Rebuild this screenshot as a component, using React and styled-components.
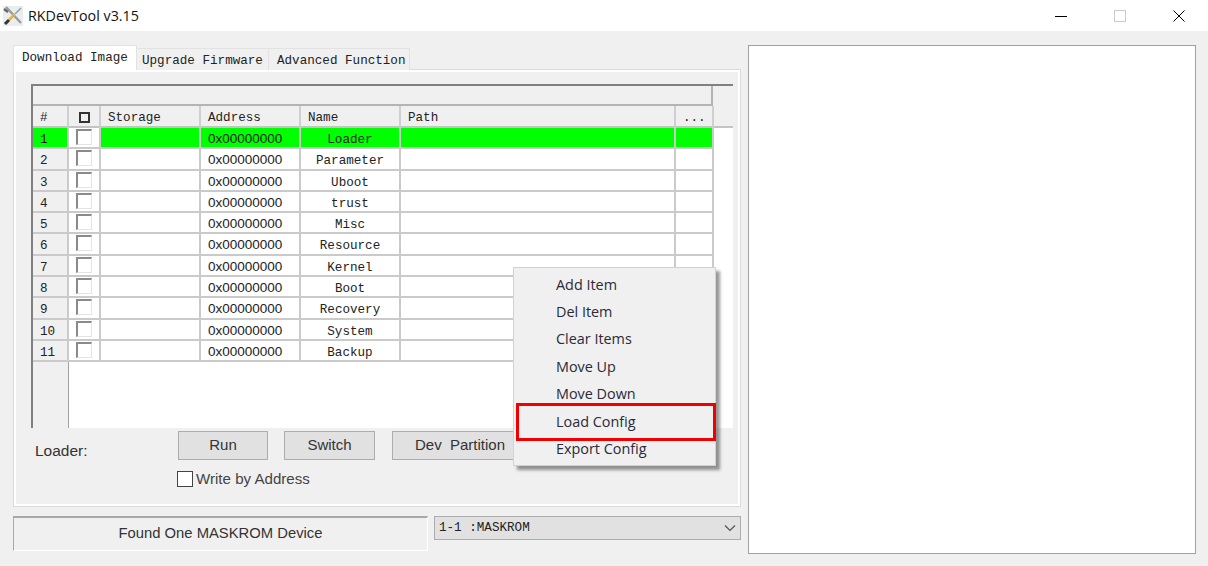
import styled, { createGlobalStyle } from "styled-components";

const partitions = ["Loader", "Parameter", "Uboot", "trust", "Misc", "Resource", "Kernel", "Boot", "Recovery", "System", "Backup"];
const menuItems = ["Add Item", "Del Item", "Clear Items", "Move Up", "Move Down", "Load Config", "Export Config"];

const mono = `"Liberation Mono", "DejaVu Sans Mono", monospace`;
const sans = `"Liberation Sans", Arial, sans-serif`;
const columns = "36px 32px 100px 100px 100px 275px 38px";

const Global = createGlobalStyle`
  html, body { margin: 0; padding: 0; background: #f0f0f0; }
  #root { width: 1208px; height: 566px; overflow: hidden; }
`;

const Win = styled.div`
  position: relative;
  width: 1208px;
  height: 566px;
  background: #f0f0f0;
  font-family: ${sans};
  color: #222;
`;

const TitleBar = styled.header`
  height: 31px;
  background: #fff;
  display: flex;
  align-items: center;
  padding-left: 3px;
  font-family: "Open Sans", "Noto Sans", sans-serif;
  font-size: 14.3px;
  color: #111;
`;

const Title = styled.span`
  margin-left: 5px;
  flex: 1;
`;

const WinButton = styled.div`
  width: 59px;
  height: 31px;
  display: flex;
  align-items: center;
  justify-content: center;
`;

const Body = styled.main`
  display: flex;
  gap: 7px;
  padding: 14px 0 0 13px;
`;

const LeftColumn = styled.div`
  width: 728px;
`;

const Tabs = styled.nav`
  display: flex;
  align-items: flex-end;
  height: 25px;
  margin-bottom: -1px;
  position: relative;
  z-index: 1;
`;

const Tab = styled.div`
  box-sizing: border-box;
  width: ${(p) => p.$w}px;
  height: ${(p) => (p.$active ? 25 : 22)}px;
  background: ${(p) => (p.$active ? "#fff" : "#f0f0f0")};
  border: 1px solid #e2e2e2;
  border-bottom: none;
  border-left-width: ${(p) => (p.$active ? 1 : 0)}px;
  font-family: ${mono};
  font-size: 12.6px;
  line-height: 24px;
  padding-left: ${(p) => p.$pad}px;
  white-space: nowrap;
  color: #222;
`;

const Panel = styled.section`
  box-sizing: border-box;
  height: 438px;
  border: 1px solid #dcdcdc;
  box-shadow: inset 2px 2px 0 #fff, inset -2px -2px 0 #fff;
  padding: 14px 7px 0 17px;
`;

const Frame = styled.div`
  box-sizing: border-box;
  width: 702px;
  height: 344px;
  display: flex;
  flex-direction: column;
  background: #fff;
  border-top: 2px solid #808080;
  border-left: 2px solid #808080;
`;

const TopStrip = styled.div`
  flex: none;
  height: 20px;
  background: #f0f0f0;
`;

const TopStripInner = styled.div`
  box-sizing: border-box;
  width: 680px;
  height: 20px;
  border-right: 2px solid #b4b4b4;
  border-bottom: 2px solid #b4b4b4;
`;

const HeaderRow = styled.div`
  flex: none;
  display: grid;
  grid-template-columns: ${columns} 1fr;
  height: 22px;
  background: #f0f0f0;
  box-shadow: inset 0 -2px 0 #c4c4c4;
`;

const HeaderCell = styled.div`
  box-sizing: border-box;
  border-right: 2px solid ${(p) => (p.$plain ? "transparent" : "#cfcfcf")};
  padding-left: 7px;
  padding-top: 2px;
  font-family: ${mono};
  font-size: 12.6px;
  line-height: 21px;
  color: #222;
  display: flex;
  align-items: center;
  justify-content: ${(p) => (p.$center ? "center" : "flex-start")};
`;

const HeaderCheck = styled.span`
  box-sizing: border-box;
  width: 11px;
  height: 11px;
  margin-left: -7px;
  margin-top: -3px;
  border: 2px solid #333;
`;

const Row = styled.div`
  flex: none;
  display: grid;
  grid-template-columns: ${columns};
  height: 21.3px;
`;

const Cell = styled.div`
  box-sizing: border-box;
  height: 21.3px;
  border-right: 2px solid #cacaca;
  border-bottom: 2px solid #cacaca;
  background: ${(p) => (p.$active ? "#00ff00" : "#fff")};
  color: #222;
  text-align: ${(p) => (p.$center ? "center" : "left")};
  font-family: ${(p) => (p.$sans ? sans : mono)};
  font-size: ${(p) => (p.$sans ? 13.5 : 12.6)}px;
  line-height: ${(p) => (p.$sans ? 22.4 : 24.4)}px;
  padding-left: ${(p) => (p.$sans ? 7 : 0)}px;
  white-space: nowrap;
`;

const IndexCell = styled(Cell)`
  background: ${(p) => (p.$active ? "#00ff00" : "#f0f0f0")};
  padding-left: 7px;
`;

const CheckCell = styled(Cell)`
  display: flex;
  justify-content: center;
  padding: 1px 1px 0 0;
  background: #fff;
`;

const RowCheck = styled.span`
  box-sizing: border-box;
  width: 16px;
  height: 16px;
  border: 1px solid #e4e4e4;
  border-top: 2px solid #8a8a8a;
  border-left: 2px solid #8a8a8a;
`;

const Filler = styled.div`
  flex: 1;
  display: flex;
`;

const Gutter = styled.div`
  width: 35px;
  background: #f0f0f0;
  border-right: 1px solid #a0a0a0;
`;

const Controls = styled.div`
  display: flex;
  margin-top: 3px;
  height: 29px;
`;

const LoaderLabel = styled.div`
  width: 147px;
  padding: 11px 0 0 4px;
  box-sizing: border-box;
  font-size: 15.5px;
  color: #333;
`;

const ActionButton = styled.div`
  box-sizing: border-box;
  width: ${(p) => p.$w}px;
  height: 29px;
  margin-right: ${(p) => p.$gap}px;
  background: #e1e1e1;
  border: 1px solid #adadad;
  font-size: 15px;
  line-height: 26px;
  text-align: center;
  white-space: pre;
  color: #333;
`;

const AddressOption = styled.label`
  display: flex;
  align-items: center;
  gap: 3px;
  margin: 10px 0 0 146px;
  font-size: 15.1px;
  color: #444;
`;

const OptionBox = styled.span`
  box-sizing: border-box;
  width: 16px;
  height: 16px;
  background: #fff;
  border: 1px solid #444;
`;

const StatusRow = styled.div`
  display: flex;
  gap: 6px;
  margin-top: 9px;
`;

const StatusBox = styled.div`
  box-sizing: border-box;
  width: 415px;
  height: 35px;
  border-top: 2px solid #a8a8a8;
  border-left: 1px solid #a8a8a8;
  border-right: 1px solid #fff;
  border-bottom: 1px solid #fff;
  text-align: center;
  font-size: 14.8px;
  line-height: 31px;
  color: #333;
`;

const DeviceSelect = styled.div`
  box-sizing: border-box;
  width: 307px;
  height: 24px;
  display: flex;
  align-items: center;
  justify-content: space-between;
  padding: 0 4px 0 4px;
  background: #e1e1e1;
  border: 1px solid #adadad;
  font-family: ${mono};
  font-size: 12.6px;
  color: #222;
  white-space: pre;
`;

const Preview = styled.aside`
  box-sizing: border-box;
  width: 448px;
  height: 509px;
  background: #fff;
  border: 1px solid #a0a0a8;
`;

const Menu = styled.ul`
  position: absolute;
  left: 513px;
  top: 267px;
  box-sizing: border-box;
  width: 203px;
  height: 199px;
  margin: 0;
  padding: 2.5px 0 0;
  list-style: none;
  background: #f0f0f0;
  border: 1px solid #d2d2d2;
  box-shadow: 4px 4px 3px rgba(0, 0, 0, 0.4);
  font-family: "Open Sans", "Noto Sans", sans-serif;
  font-size: 14.4px;
  color: #2a2a3a;
`;

const MenuItem = styled.li`
  position: relative;
  height: 27.45px;
  line-height: 27px;
  padding-left: 42px;

  ${(p) =>
    p.$marked &&
    `
    &::after {
      content: "";
      position: absolute;
      left: 2px;
      right: -1px;
      top: -5px;
      bottom: -6px;
      border: 3px solid #f00000;
    }
  `}
`;

const AppIcon = () => (
  <svg width="20" height="20" viewBox="0 0 20 20">
    <rect width="20" height="20" fill="#e8edef" />
    <path d="M3 1 L18 17" stroke="#9a9a9a" strokeWidth="2.4" />
    <path d="M1 3 L5 6" stroke="#666" strokeWidth="2.4" />
    <path d="M11.5 8.5 L6 14" stroke="#e3b23c" strokeWidth="2.6" />
    <path d="M12 8 L18 2" stroke="#8fa3ad" strokeWidth="1.6" />
    <path d="M6 14 L2 18" stroke="#333" strokeWidth="3" />
  </svg>
);

export default function App() {
  return (
    <Win>
      <Global />
      <TitleBar>
        <AppIcon />
        <Title>RKDevTool v3.15</Title>
        <WinButton>
          <svg width="12" height="12"><path d="M0 6.5H12" stroke="#000" /></svg>
        </WinButton>
        <WinButton>
          <svg width="12" height="12"><rect x="0.5" y="0.5" width="11" height="11" fill="none" stroke="#ccc" /></svg>
        </WinButton>
        <WinButton>
          <svg width="12" height="12"><path d="M0.5 0.5L11.5 11.5M11.5 0.5L0.5 11.5" stroke="#000" /></svg>
        </WinButton>
      </TitleBar>
      <Body>
        <LeftColumn>
          <Tabs>
            <Tab $active $w={124} $pad={8}>Download Image</Tab>
            <Tab $w={132} $pad={5}>Upgrade Firmware</Tab>
            <Tab $w={141} $pad={8}>Advanced Function</Tab>
          </Tabs>
          <Panel>
            <Frame>
              <TopStrip><TopStripInner /></TopStrip>
              <HeaderRow>
                <HeaderCell>#</HeaderCell>
                <HeaderCell $center><HeaderCheck /></HeaderCell>
                <HeaderCell>Storage</HeaderCell>
                <HeaderCell>Address</HeaderCell>
                <HeaderCell>Name</HeaderCell>
                <HeaderCell>Path</HeaderCell>
                <HeaderCell>...</HeaderCell>
                <HeaderCell $plain />
              </HeaderRow>
              {partitions.map((name, i) => {
                const active = i === 0;
                return (
                  <Row key={name}>
                    <IndexCell $active={active}>{i + 1}</IndexCell>
                    <CheckCell><RowCheck /></CheckCell>
                    <Cell $active={active} />
                    <Cell $active={active} $sans>0x00000000</Cell>
                    <Cell $active={active} $center>{name}</Cell>
                    <Cell $active={active} />
                    <Cell $active={active} />
                  </Row>
                );
              })}
              <Filler><Gutter /></Filler>
            </Frame>
            <Controls>
              <LoaderLabel>Loader:</LoaderLabel>
              <ActionButton $w={90} $gap={16}>Run</ActionButton>
              <ActionButton $w={91} $gap={17}>Switch</ActionButton>
              <ActionButton $w={136} $gap={0}>Dev  Partition</ActionButton>
            </Controls>
            <AddressOption>
              <OptionBox />
              Write by Address
            </AddressOption>
          </Panel>
          <StatusRow>
            <StatusBox>Found One MASKROM Device</StatusBox>
            <DeviceSelect>
              1-1 :MASKROM
              <svg width="12" height="8" viewBox="0 0 12 8">
                <path d="M1 1.5L6 6.5L11 1.5" fill="none" stroke="#555" strokeWidth="1.2" />
              </svg>
            </DeviceSelect>
          </StatusRow>
        </LeftColumn>
        <Preview />
      </Body>
      <Menu>
        {menuItems.map((item) => (
          <MenuItem key={item} $marked={item === "Load Config"}>{item}</MenuItem>
        ))}
      </Menu>
    </Win>
  );
}
